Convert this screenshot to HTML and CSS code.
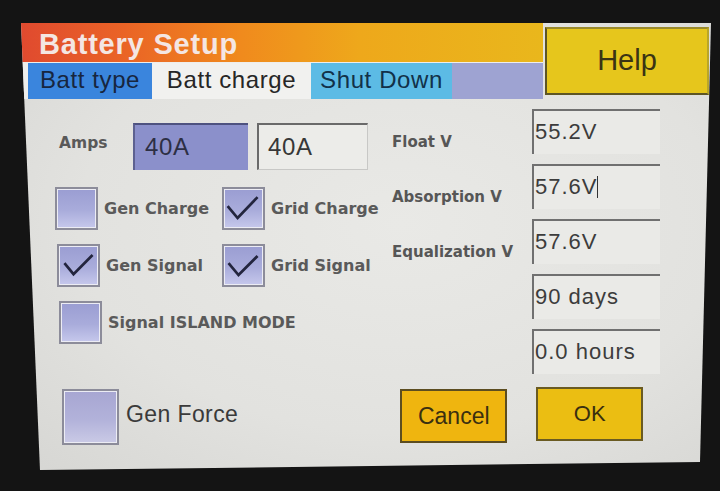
FILE: index.html
```html
<!DOCTYPE html>
<html>
<head>
<meta charset="utf-8">
<link rel="stylesheet" href="styles.css">
</head>
<body>
<div class="screen">
  <div class="top">
    <div class="titlecol">
      <div class="title">Battery Setup</div>
      <div class="tabs">
        <div class="tab tab-type">Batt type</div>
        <div class="tab tab-charge">Batt charge</div>
        <div class="tab tab-shut">Shut Down</div>
        <div class="tab tab-fill"></div>
      </div>
    </div>
    <div class="help">Help</div>
  </div>
  <div class="main">
    <div class="left">
      <div class="amps">
        <div class="amps-label">Amps</div>
        <div class="abox abox-sel">40A</div>
        <div class="abox abox-in">40A</div>
      </div>
      <div class="checks">
        <div class="cb"></div>
        <div class="cblabel">Gen Charge</div>
        <div class="cb"><svg viewBox="0 0 43 43"><polyline points="4,19 15,32 37,9"/></svg></div>
        <div class="cblabel">Grid Charge</div>
        <div class="cb cb-r2"><svg viewBox="0 0 43 43"><polyline points="6,19 16,31 37,10"/></svg></div>
        <div class="cblabel cb-r2">Gen Signal</div>
        <div class="cb"><svg viewBox="0 0 43 43"><polyline points="5,19 16,32 37,11"/></svg></div>
        <div class="cblabel">Grid Signal</div>
        <div class="cb cb-r3"></div>
        <div class="cblabel cb-r3 span3">Signal ISLAND MODE</div>
      </div>
    </div>
    <div class="right">
      <div class="vrow"><div class="vlabel">Float V</div><div class="field">55.2V</div></div>
      <div class="vrow"><div class="vlabel">Absorption V</div><div class="field">57.6V<span class="caret"></span></div></div>
      <div class="vrow"><div class="vlabel">Equalization V</div><div class="field">57.6V</div></div>
      <div class="vrow"><div class="vlabel"></div><div class="field">90 days</div></div>
      <div class="vrow"><div class="vlabel"></div><div class="field">0.0 hours</div></div>
    </div>
  </div>
  <div class="bottom">
    <div class="cb cb-big"></div>
    <div class="force">Gen Force</div>
    <div class="btn btn-cancel">Cancel</div>
    <div class="btn btn-ok">OK</div>
  </div>
</div>
</body>
</html>
```
FILE: styles.css
```css
html, body {
  margin: 0;
  padding: 0;
}
body {
  width: 720px;
  height: 491px;
  overflow: hidden;
  background: #141414;
  font-family: "Liberation Sans", Arial, sans-serif;
}
.screen {
  margin: 23px 0 0 21px;
  width: 690px;
  height: 447px;
  background: radial-gradient(ellipse at 55% 45%, #e9e9e6 0%, #e2e2df 60%, #d6d6d3 100%);
  display: flex;
  flex-direction: column;
  clip-path: polygon(0 0, 100% 0, 679px 439px, 19px 100%);
}
.top {
  display: flex;
  height: 76px;
  flex: none;
}
.titlecol {
  width: 522px;
  display: flex;
  flex-direction: column;
}
.title {
  height: 39px;
  box-sizing: border-box;
  padding: 4px 0 0 18px;
  line-height: 35px;
  font-size: 29px;
  font-weight: bold;
  letter-spacing: 0.8px;
  color: #f4e6e3;
  background: linear-gradient(90deg, #e04a2f 0%, #ea6426 20%, #f08a1d 42%, #eea81b 65%, #e9b71c 100%);
}
.tabs {
  display: flex;
  height: 37px;
  box-sizing: border-box;
  padding-top: 1px;
  background: #eeeeec;
}
.tab {
  height: 36px;
  box-sizing: border-box;
  padding-bottom: 3px;
  line-height: 33px;
  font-size: 24px;
  letter-spacing: 0.6px;
  text-align: center;
  color: #1d2430;
}
.tab-type {
  margin-left: 7px;
  width: 124px;
  background: #3a85dd;
  color: #17263f;
}
.tab-charge {
  width: 159px;
  background: #f1f1ef;
  color: #262626;
}
.tab-shut {
  width: 141px;
  background: #5cbbe5;
  color: #123149;
}
.tab-fill {
  flex: 1;
  background: #9ea3d2;
}
.help {
  margin: 4px 0 0 2px;
  width: 164px;
  height: 68px;
  box-sizing: border-box;
  background: #e6c61c;
  border: 2px solid #5d5524;
  border-top-color: #9a8a2a;
  border-right-color: #b8a52a;
  font-size: 29px;
  line-height: 62px;
  text-align: center;
  color: #3b3414;
}
.main {
  display: flex;
  height: 275px;
  flex: none;
}
.left {
  width: 359px;
}
.amps {
  display: flex;
  margin-top: 24px;
  padding-left: 38px;
  height: 47px;
}
.amps-label {
  width: 74px;
  font-family: "DejaVu Sans", sans-serif;
  font-weight: bold;
  font-size: 15.5px;
  line-height: 40px;
  color: #595959;
}
.abox {
  height: 47px;
  box-sizing: border-box;
  font-size: 24px;
  letter-spacing: 0.6px;
  line-height: 44px;
  color: #373737;
}
.abox-sel {
  width: 115px;
  padding-left: 10px;
  background: #8b90cb;
  border-top: 2px solid #4e5280;
  border-left: 2px solid #5d6190;
  color: #2d2f44;
}
.abox-in {
  margin-left: 9px;
  width: 111px;
  padding-left: 9px;
  background: #ecece9;
  border-top: 2px solid #6a6a6a;
  border-left: 2px solid #6a6a6a;
  border-right: 1px solid #c8c8c6;
  border-bottom: 1px solid #c8c8c6;
}
.checks {
  display: grid;
  grid-template-columns: 43px 112px 43px auto;
  grid-template-rows: 43px 43px 43px;
  column-gap: 6px;
  row-gap: 14px;
  margin-top: 17px;
  padding-left: 34px;
  align-items: center;
}
.cb {
  width: 43px;
  height: 43px;
  box-sizing: border-box;
  border: 2px solid #8c8c9a;
  box-shadow: inset 0 0 0 1px #ececf4;
  background: linear-gradient(180deg, #9a9dd2 0%, #a9acdb 55%, #c6c8ec 100%);
}
.cb-r2 {
  margin-left: 2px;
}
.cb-r3 {
  margin-left: 4px;
}
.cb svg {
  display: block;
  width: 39px;
  height: 39px;
}
.cb polyline {
  fill: none;
  stroke: #23253e;
  stroke-width: 3;
  stroke-linejoin: miter;
}
.cblabel {
  font-family: "DejaVu Sans", sans-serif;
  font-weight: bold;
  font-size: 16px;
  color: #5a5a5a;
  white-space: nowrap;
}
.span3 {
  grid-column: 2 / 5;
}
.right {
  flex: 1;
  padding-top: 10px;
  padding-left: 12px;
  display: flex;
  flex-direction: column;
  gap: 10px;
}
.vrow {
  display: flex;
  align-items: flex-end;
  height: 45px;
}
.vlabel {
  width: 140px;
  font-family: "DejaVu Sans", sans-serif;
  font-weight: bold;
  font-size: 15px;
  line-height: 20px;
  padding-bottom: 2px;
  color: #565656;
  white-space: nowrap;
}
.field {
  width: 128px;
  height: 45px;
  box-sizing: border-box;
  padding-left: 1px;
  background: #eaeae7;
  border-top: 2px solid #707070;
  border-left: 2px solid #707070;
  font-size: 22px;
  letter-spacing: 1px;
  line-height: 41px;
  color: #3c3c3c;
}
.caret {
  display: inline-block;
  width: 0;
  height: 22px;
  border-left: 1px solid #333;
  vertical-align: -4px;
  margin-left: -1px;
}
.bottom {
  display: flex;
  align-items: flex-start;
  margin-top: 15px;
  padding-left: 41px;
}
.cb-big {
  width: 57px;
  height: 56px;
  background: linear-gradient(180deg, #a7a6d2 0%, #b2b2da 55%, #cacae6 100%);
}
.force {
  margin-left: 7px;
  font-size: 23px;
  letter-spacing: 0.4px;
  line-height: 50px;
  color: #3a3a3a;
}
.btn {
  height: 54px;
  width: 107px;
  box-sizing: border-box;
  border: 2px solid #5c4d20;
  font-size: 23px;
  line-height: 50px;
  text-align: center;
  color: #3a2f10;
}
.btn-cancel {
  margin-left: 162px;
  background: #efb50f;
}
.btn-ok {
  margin-left: 29px;
  margin-top: -2px;
  background: #ebbe12;
  border-color: #6a5b22;
  font-size: 22px;
}
```
